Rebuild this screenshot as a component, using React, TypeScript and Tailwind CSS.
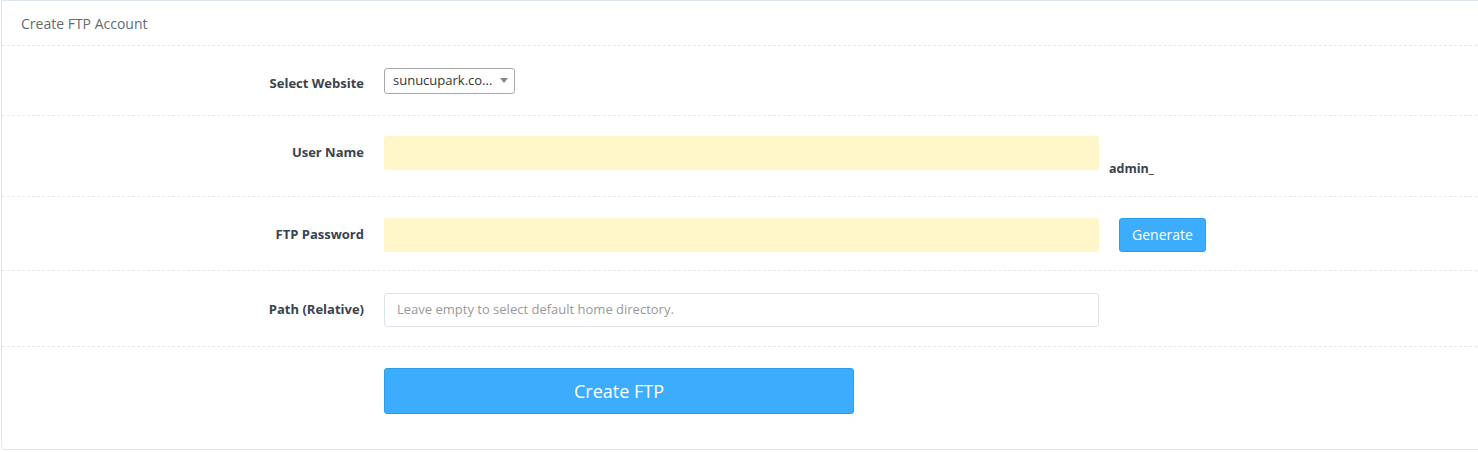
import React from 'react';

const font = { fontFamily: '"Open Sans", "Liberation Sans", sans-serif' };

function Row({ label, className, labelClass = '', children }: { label?: string; className: string; labelClass?: string; children: React.ReactNode }) {
  return (
    <div className={`flex border-b border-dashed border-[#e4e8ec] ${className}`}>
      <div className={`w-[362px] shrink-0 text-right text-[13px] font-bold text-[#3a4250] ${labelClass}`}>{label}</div>
      <div className="ml-[20px] flex">{children}</div>
    </div>
  );
}

export default function App() {
  return (
    <div className="h-[452px] bg-white" style={font}>
      <div className="ml-[1px] mr-[-10px] h-[450px] rounded-bl-[4px] border border-[#dde5ee] bg-white">
        <div className="flex h-[45px] items-center border-b border-dashed border-[#e4e8ec] pl-[19px] pt-[1px] text-[14px] text-[#646a70]">
          Create FTP Account
        </div>

        <Row label="Select Website" className="h-[70px] items-center" labelClass="mt-[6px]">
          <div className="relative flex h-[26px] w-[131px] items-center rounded-[3px] border border-[#a9a9a9] bg-white pl-[8px] text-[13px] text-[#333]">
            sunucupark.co...
            <span className="absolute right-[6px] top-[9px] h-0 w-0 border-x-[4px] border-t-[5px] border-x-transparent border-t-[#888]" />
          </div>
        </Row>

        <Row label="User Name" className="h-[81px] items-center pb-[6px]">
          <div className="h-[34px] w-[715px] rounded-[3px] bg-[#fff6c9]" />
          <div className="mb-[-5px] ml-[10px] self-end text-[12.5px] font-bold leading-none text-[#3a4250]">admin_</div>
        </Row>

        <Row label="FTP Password" className="h-[74px] items-center pt-[2px]">
          <div className="h-[34px] w-[715px] rounded-[3px] bg-[#fff6c9]" />
          <button className="ml-[20px] h-[34px] w-[87px] rounded-[3px] border border-[#2c9ee8] bg-[#3cadfc] text-[14px] text-white">
            Generate
          </button>
        </Row>

        <Row label="Path (Relative)" className="h-[76px] items-center pt-[3px]">
          <div className="flex h-[34px] w-[715px] items-center rounded-[3px] border border-[#dde3ea] bg-white pl-[12px] text-[13px] text-[#999]">
            Leave empty to select default home directory.
          </div>
        </Row>

        <div className="flex pt-[21px]">
          <div className="w-[362px] shrink-0" />
          <button className="ml-[20px] h-[46px] w-[470px] rounded-[3px] border border-[#2c9ee8] bg-[#3cadfc] text-[18px] text-white">
            Create FTP
          </button>
        </div>
      </div>
    </div>
  );
}
